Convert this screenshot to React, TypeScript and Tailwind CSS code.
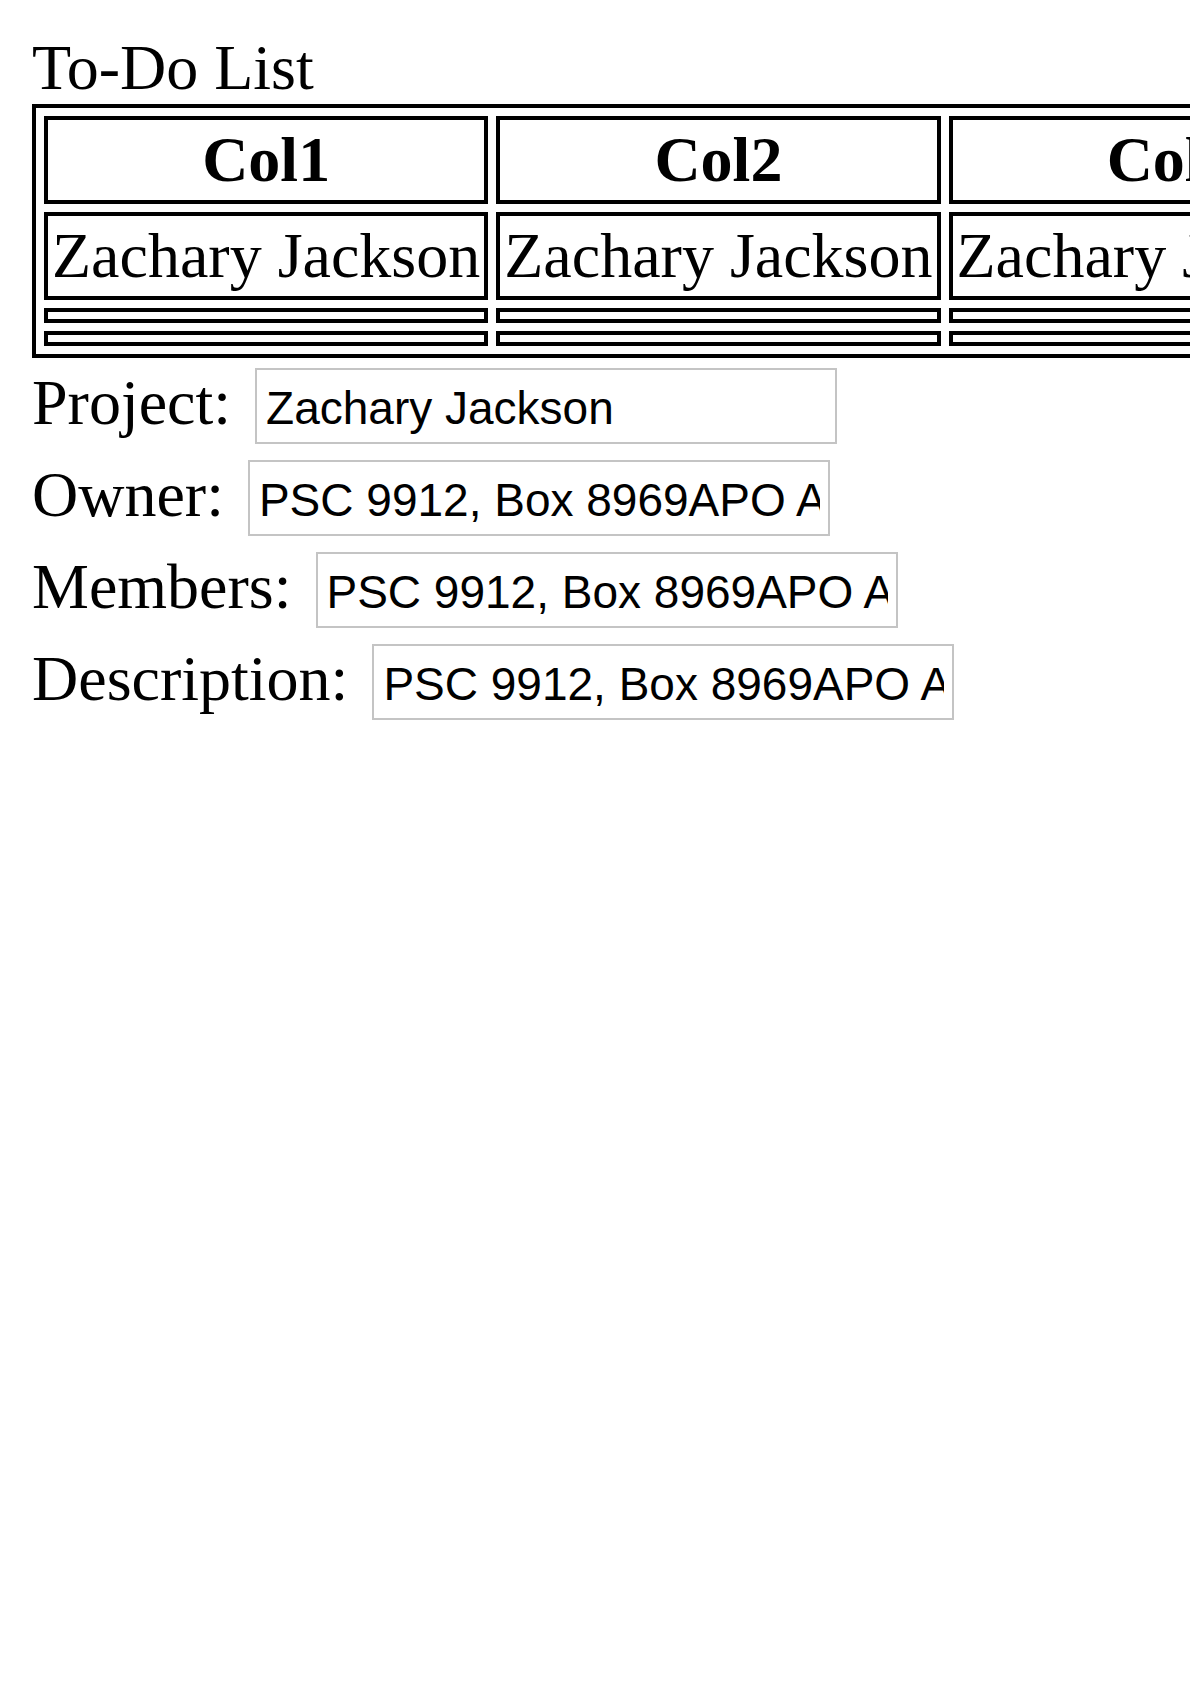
const columns = ["Col1", "Col2", "Col3"];

const fields = [
  { label: "Project:", value: "Zachary Jackson" },
  { label: "Owner:", value: "PSC 9912, Box 8969APO AP 69565" },
  { label: "Members:", value: "PSC 9912, Box 8969APO AP 69565" },
  { label: "Description:", value: "PSC 9912, Box 8969APO AP 69565" },
];

export default function App() {
  return (
    <div className="min-h-screen overflow-hidden bg-white p-8 font-['Liberation_Serif',serif] text-[64px] leading-[72px] text-black">
      <div>To-Do List</div>

      <table className="mb-[2px] border-separate border-spacing-2 border-4 border-black whitespace-nowrap">
        <thead>
          <tr>
            {columns.map(c => (
              <th key={c} className="border-4 border-black p-1 text-center font-bold">
                {c}
              </th>
            ))}
          </tr>
        </thead>
        <tbody>
          <tr>
            {columns.map(c => (
              <td key={c} className="border-4 border-black p-1 text-left">
                Zachary Jackson
              </td>
            ))}
          </tr>
          {/* two blank rows */}
          {[0, 1].map(r => (
            <tr key={r}>
              {columns.map(c => (
                <td key={c} className="border-4 border-black px-1 py-[3.5px]"></td>
              ))}
            </tr>
          ))}
        </tbody>
      </table>

      {fields.map(f => (
        <div key={f.label} className="flex items-baseline">
          <span>{f.label}</span>
          <input
            defaultValue={f.value}
            className="my-2 ml-6 h-[76px] w-[582px] border-2 border-[#c4c4c4] pb-0 pl-[9px] pr-2 pt-1 font-['Liberation_Sans',sans-serif] text-[46px] text-black outline-none"
          />
        </div>
      ))}
    </div>
  );
}
